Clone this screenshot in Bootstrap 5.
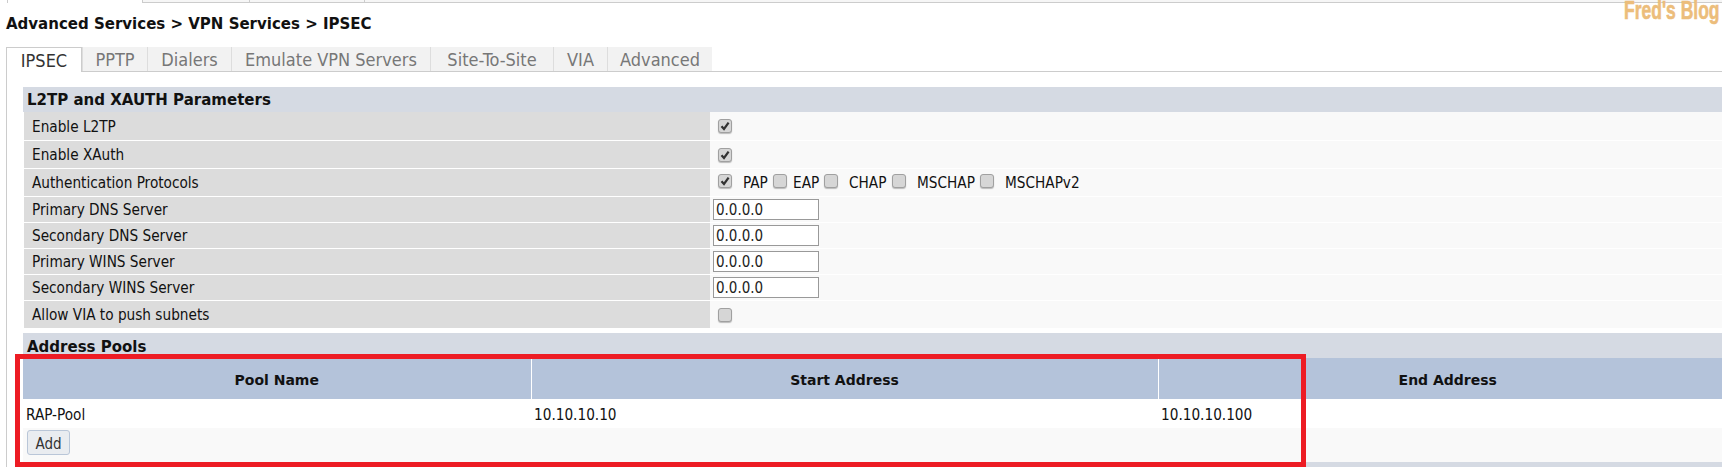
<!DOCTYPE html>
<html lang="en">
<head>
<meta charset="utf-8">
<title>IPSEC</title>
<link rel="stylesheet" href="https://cdn.jsdelivr.net/npm/bootstrap@5.3.0/dist/css/bootstrap.min.css">
<style>
html,body{height:467px;overflow:hidden;}
body{position:relative;background:#fff;color:#111;font-family:"DejaVu Sans Condensed","DejaVu Sans",sans-serif;font-size:15.2px;}
.top-strip{height:3px;border-bottom:1px solid #ccc;background:#f6f6f6;}
.top-strip span{display:block;height:3px;border-right:1px solid #ccc;}
.top-a{width:8px;background:#fff;}
.top-b{width:135px;background:#fff;}
.top-c{width:107px;}
.top-d{width:115px;}
.crumb{height:44px;margin:0;padding:13px 0 0 6px;font-family:"DejaVu Sans",sans-serif;font-size:15px;font-weight:700;line-height:17px;color:#111;}
.blog-mark{position:absolute;top:0;right:2px;font-family:"Liberation Sans",sans-serif;font-weight:700;font-size:25px;line-height:20px;color:#ecbd7b;-webkit-text-stroke:.6px #ecbd7b;transform:scaleX(.7);transform-origin:right center;}
.tab-row{margin-left:6px;height:25px;border-bottom:1px solid #ccc;flex-wrap:nowrap;}
.tab-row .nav-link{height:24px;margin:0;padding:0;border:0;border-left:1px solid #ddd;border-radius:0;background:#f2f2f2;color:#777;font-size:18px;line-height:25px;text-align:center;}
.tab-row .nav-link.active{height:25px;background:#fff;color:#333;border:1px solid #ccc;border-bottom:0;border-right-color:#ccc;}
.t1{width:76px;}.t2{width:65px;}.t3{width:84px;}.t4{width:199px;}.t5{width:123px;}.t6{width:54px;}.t7{width:105px;}
.pane{margin-left:6px;height:395px;padding:15px 0 0 16px;border-left:1px solid #ccc;}
.sect-head{background:#d5dae3;font-family:"DejaVu Sans",sans-serif;font-weight:700;font-size:15px;padding-left:4px;}
.h-a{height:25px;line-height:26px;}
.h-b{height:25px;line-height:29px;margin-top:5px;}
.prop{margin:0 0 1px 1px;}
.prop-label{width:686px;background:#dcdcdc;padding:2px 0 0 8px;flex:none;}
.prop-val{flex:1;background:#f9f9f9;padding-left:3px;}
.rh28{height:28px;}.rh27{height:27px;}.rh25{height:25px;}
.chk{appearance:none;-webkit-appearance:none;width:14px;height:14px;margin:0 0 0 5px;flex:none;border:1px solid #a0a0a0;border-radius:3px;background:#d6d6d6 center/12px 12px no-repeat;box-shadow:0 1px 1px #bbb;}
.chk:checked{background-image:url("data:image/svg+xml,%3Csvg xmlns='http://www.w3.org/2000/svg' viewBox='0 0 12 12'%3E%3Cpath d='M2.5 6.2 5 9l4.6-6.4' fill='none' stroke='%23333' stroke-width='2.2'/%3E%3C/svg%3E");}
.chk-up{margin-top:-3px;}
.chk-text{margin-left:11px;padding-top:2px;white-space:nowrap;}
.chk-text.near{margin-left:6px;}
.w-pap{width:25px;}.w-eap{width:26px;}.w-chap{width:38px;}.w-ms{width:58px;}.w-ms2{width:76px;}
.ip-box{width:106px;height:21px;padding:0 0 0 2px;border:1px solid #999;border-radius:0;font-size:15px;line-height:19px;color:#222;background:#fff;}
.pool-table{width:1714px;margin:0;table-layout:fixed;--bs-table-bg:transparent;}
.pool-table th{height:41px;padding:4px 0 0;background:#b4c3da;border:0;border-right:1px solid #fff;text-align:center;vertical-align:middle;font-family:"DejaVu Sans",sans-serif;font-size:14px;color:#111;}
.pool-table th:last-child{border-right:0;}
.pool-table td{height:29px;padding:3px 0 0 3px;background:#fff;border:0;vertical-align:middle;font-size:15.2px;color:#111;}
.c-one{width:508px;}.c-two{width:627px;}
.pool-foot{height:34px;background:#f9f9f9;padding:2px 0 0 4px;}
.add-btn{width:43px;height:25px;padding:3px 0 0;font-size:15px;line-height:20px;color:#333;border:1px solid #b9c6d8;border-radius:3px;background:#e9ecf0;}
.red-frame{position:absolute;left:15px;top:354px;width:1291px;height:113px;border:5px solid #ed1c24;pointer-events:none;}
</style>
</head>
<body>
<div class="top-strip d-flex"><span class="top-a"></span><span class="top-b"></span><span class="top-c"></span><span class="top-d"></span></div>
<div class="blog-mark">Fred's Blog</div>
<h1 class="crumb">Advanced Services &gt; VPN Services &gt; IPSEC</h1>
<ul class="nav nav-tabs tab-row">
  <li class="nav-item"><a class="nav-link active t1" href="#">IPSEC</a></li>
  <li class="nav-item"><a class="nav-link t2" href="#">PPTP</a></li>
  <li class="nav-item"><a class="nav-link t3" href="#">Dialers</a></li>
  <li class="nav-item"><a class="nav-link t4" href="#">Emulate VPN Servers</a></li>
  <li class="nav-item"><a class="nav-link t5" href="#">Site-To-Site</a></li>
  <li class="nav-item"><a class="nav-link t6" href="#">VIA</a></li>
  <li class="nav-item"><a class="nav-link t7" href="#">Advanced</a></li>
</ul>
<div class="pane">
  <div class="sect-head h-a">L2TP and XAUTH Parameters</div>
  <div class="prop d-flex rh28"><div class="prop-label d-flex align-items-center">Enable L2TP</div><div class="prop-val d-flex align-items-center"><input class="chk" type="checkbox" checked aria-label="Enable L2TP"></div></div>
  <div class="prop d-flex rh27"><div class="prop-label d-flex align-items-center">Enable XAuth</div><div class="prop-val d-flex align-items-center"><input class="chk" type="checkbox" checked aria-label="Enable XAuth"></div></div>
  <div class="prop d-flex rh27"><div class="prop-label d-flex align-items-center">Authentication Protocols</div>
    <div class="prop-val d-flex align-items-center">
      <input class="chk chk-up" type="checkbox" checked aria-label="PAP"><span class="chk-text w-pap">PAP</span>
      <input class="chk chk-up" type="checkbox" aria-label="EAP"><span class="chk-text near w-eap">EAP</span>
      <input class="chk chk-up" type="checkbox" aria-label="CHAP"><span class="chk-text w-chap">CHAP</span>
      <input class="chk chk-up" type="checkbox" aria-label="MSCHAP"><span class="chk-text w-ms">MSCHAP</span>
      <input class="chk chk-up" type="checkbox" aria-label="MSCHAPv2"><span class="chk-text w-ms2">MSCHAPv2</span>
    </div></div>
  <div class="prop d-flex rh25"><div class="prop-label d-flex align-items-center">Primary DNS Server</div><div class="prop-val d-flex align-items-center"><input class="form-control ip-box" value="0.0.0.0" aria-label="Primary DNS Server"></div></div>
  <div class="prop d-flex rh25"><div class="prop-label d-flex align-items-center">Secondary DNS Server</div><div class="prop-val d-flex align-items-center"><input class="form-control ip-box" value="0.0.0.0" aria-label="Secondary DNS Server"></div></div>
  <div class="prop d-flex rh25"><div class="prop-label d-flex align-items-center">Primary WINS Server</div><div class="prop-val d-flex align-items-center"><input class="form-control ip-box" value="0.0.0.0" aria-label="Primary WINS Server"></div></div>
  <div class="prop d-flex rh25"><div class="prop-label d-flex align-items-center">Secondary WINS Server</div><div class="prop-val d-flex align-items-center"><input class="form-control ip-box" value="0.0.0.0" aria-label="Secondary WINS Server"></div></div>
  <div class="prop d-flex rh27"><div class="prop-label d-flex align-items-center">Allow VIA to push subnets</div><div class="prop-val d-flex align-items-center"><input class="chk" type="checkbox" aria-label="Allow VIA to push subnets"></div></div>
  <div class="sect-head h-b">Address Pools</div>
  <table class="table pool-table">
    <colgroup><col class="c-one"><col class="c-two"><col></colgroup>
    <thead><tr><th>Pool Name</th><th>Start Address</th><th>End Address</th></tr></thead>
    <tbody><tr><td>RAP-Pool</td><td>10.10.10.10</td><td>10.10.10.100</td></tr></tbody>
  </table>
  <div class="pool-foot"><button type="button" class="btn btn-light add-btn">Add</button></div>
  <div class="sect-head h-a"></div>
</div>
<div class="red-frame"></div>
<script src="https://cdn.jsdelivr.net/npm/bootstrap@5.3.0/dist/js/bootstrap.bundle.min.js"></script>
</body>
</html>
